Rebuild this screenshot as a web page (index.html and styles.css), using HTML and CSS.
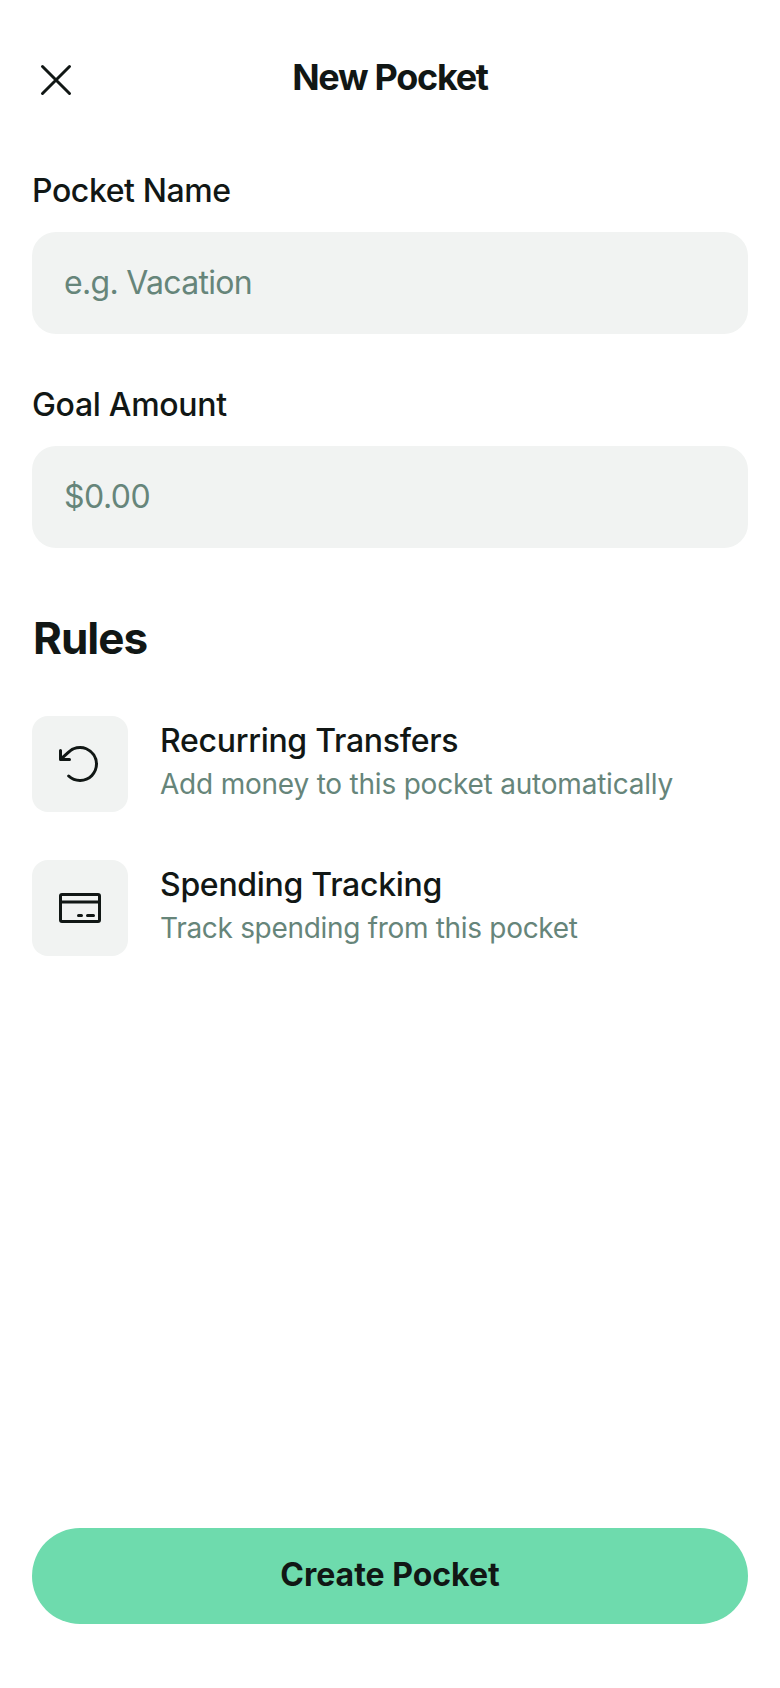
FILE: index.html
```html
<!DOCTYPE html>
<html lang="en">
<head>
<meta charset="utf-8">
<title>New Pocket</title>
<link rel="stylesheet" href="styles.css">
</head>
<body>
<div class="screen">
  <header class="header">
    <button class="close" type="button" aria-label="Close">
      <svg class="icon" viewBox="0 0 256 256"><path d="M200 56 56 200M200 200 56 56"/></svg>
    </button>
    <h1 class="title"><span>New Pocket</span></h1>
  </header>
  <main class="content">
    <label class="field">
      <span class="label label-name">Pocket Name</span>
      <input class="input input-name" type="text" placeholder="e.g. Vacation">
    </label>
    <label class="field">
      <span class="label label-goal">Goal Amount</span>
      <input class="input input-goal" type="text" placeholder="$0.00">
    </label>
    <h2 class="section-title"><span>Rules</span></h2>
    <div class="rules">
      <div class="rule">
        <div class="tile">
          <svg class="icon icon-solid" viewBox="0 0 256 256"><path d="M224,128a96,96,0,0,1-94.71,96H128A95.38,95.38,0,0,1,62.1,197.8a8,8,0,0,1,11-11.63A80,80,0,1,0,71.43,71.39a3.07,3.07,0,0,1-.26.25L44.59,96H72a8,8,0,0,1,0,16H24a8,8,0,0,1-8-8V56a8,8,0,0,1,16,0V85.8L60.25,60A96,96,0,0,1,224,128Z"/></svg>
        </div>
        <div class="rule-text">
          <p class="rule-name recurring-name"><span>Recurring Transfers</span></p>
          <p class="rule-note recurring-note"><span>Add money to this pocket automatically</span></p>
        </div>
      </div>
      <div class="rule">
        <div class="tile">
          <svg class="icon" viewBox="0 0 256 256"><rect x="24" y="56" width="208" height="144" rx="8"/><path d="M24 96h208M168 168h32M120 168h16"/></svg>
        </div>
        <div class="rule-text">
          <p class="rule-name spending-name"><span>Spending Tracking</span></p>
          <p class="rule-note spending-note"><span>Track spending from this pocket</span></p>
        </div>
      </div>
    </div>
  </main>
  <footer class="footer">
    <button class="create" type="button"><span>Create Pocket</span></button>
  </footer>
</div>
</body>
</html>
```
FILE: styles.css
```css
* { box-sizing: border-box; margin: 0; }
body {
  background: #fff;
  color: #111715;
  font-family: Inter, "Liberation Sans", sans-serif;
}
.screen {
  display: flex;
  flex-direction: column;
  height: 1688px;
  padding: 32px 32px 64px;
}
.header {
  display: flex;
  align-items: center;
  height: 96px;
}
.close {
  display: flex;
  padding: 0;
  border: 0;
  background: none;
  color: inherit;
}
.icon {
  display: block;
  width: 48px;
  height: 48px;
  fill: none;
  stroke: currentColor;
  stroke-width: 16;
  stroke-linecap: round;
  stroke-linejoin: round;
}
.icon-solid { fill: currentColor; stroke: none; }
.title {
  flex: 1;
  padding-right: 48px;
  padding-bottom: 6px;
  text-align: center;
  font-size: 36px;
  line-height: 46px;
  font-weight: 700;
  letter-spacing: -1.3px;
  white-space: nowrap;
}
.content { flex: 1; padding-top: 38px; }
.field { display: block; margin-bottom: 46px; }
.label {
  display: block;
  height: 66px;
  line-height: 50px;
  font-size: 32px;
  font-weight: 500;
}
.label-name { letter-spacing: -0.4px; }
.label-goal { letter-spacing: -0.3px; }
.input {
  display: block;
  width: 100%;
  height: 102px;
  padding: 0 32px 1px;
  border: 0;
  border-radius: 24px;
  background: #f1f3f2;
  color: #111715;
  font: 400 32px Inter, "Liberation Sans", sans-serif;
}
.input::placeholder { color: #66857a; opacity: 1; }
.input-name { letter-spacing: -0.7px; }
.input-goal { letter-spacing: -0.5px; }
.section-title {
  padding: 16px 0 0 1px;
  height: 138px;
  line-height: 56px;
  font-size: 44px;
  font-weight: 700;
  letter-spacing: -1px;
}
.rules { display: grid; gap: 48px; margin-top: -16px; }
.rule { display: flex; gap: 32px; height: 96px; }
.tile {
  display: grid;
  place-items: center;
  width: 96px;
  height: 96px;
  border-radius: 16px;
  background: #f1f3f2;
}
.rule-text { white-space: nowrap; }
.rule-name { line-height: 50px; font-size: 32px; font-weight: 500; letter-spacing: -0.29px; }
.rule-note { line-height: 36px; font-size: 28px; color: #66857a; }
.recurring-note { letter-spacing: -0.21px; }
.spending-note { letter-spacing: -0.31px; }
.create {
  display: block;
  width: 100%;
  height: 96px;
  padding: 0 0 3px;
  border: 0;
  border-radius: 48px;
  background: #6edbad;
  color: #111715;
  font: 700 32px Inter, "Liberation Sans", sans-serif;
}
```
